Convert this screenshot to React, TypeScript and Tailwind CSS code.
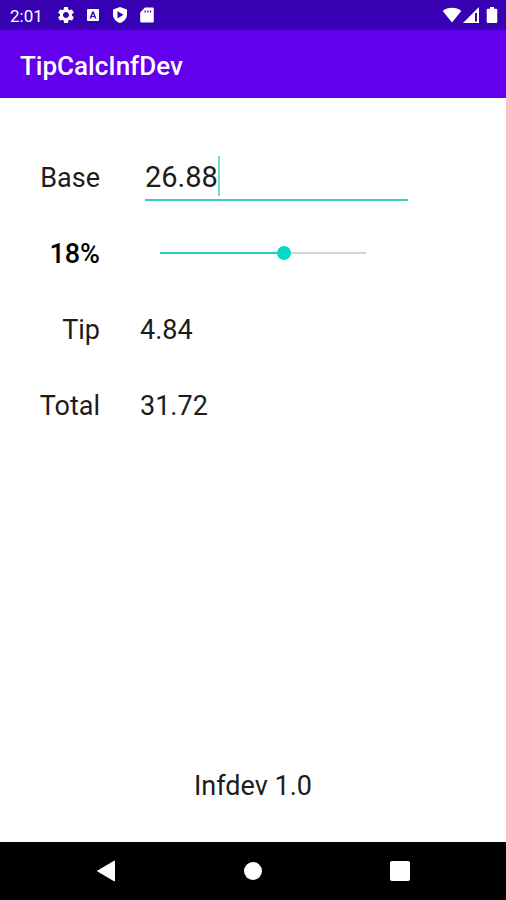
import React, { useState } from 'react';
import { MdSettings } from 'react-icons/md';

const MAX_PERCENT = 30;

const StatusBar = () => (
  <div className="flex h-[30px] items-center justify-between bg-[#3700b3] pl-[10px] pr-[5px] text-white">
    <div className="flex items-center">
      <span className="w-[46px] pt-0.5 text-[17px] leading-5">2:01</span>
      <div className="flex items-center gap-[9px]">
        <MdSettings className="h-5 w-5" />
        <svg viewBox="0 0 16 16" className="h-4 w-4">
          <path
            fillRule="evenodd"
            fill="currentColor"
            d="M3 2h10a1 1 0 0 1 1 1v10a1 1 0 0 1-1 1H3a1 1 0 0 1-1-1V3a1 1 0 0 1 1-1ZM7.2 4.5 4.6 11.5h1.5l.5-1.4h2.8l.5 1.4h1.5L8.8 4.5ZM8 6.3l.9 2.6H7.1Z"
          />
        </svg>
        <svg viewBox="0 0 20 20" className="h-5 w-5">
          <path
            fillRule="evenodd"
            fill="currentColor"
            d="M10 2 17 4.6V9.5c0 4-2.9 7.2-7 8.5-4.1-1.3-7-4.5-7-8.5V4.6ZM7.5 6.2v7.2l6-3.6Z"
          />
        </svg>
        <svg viewBox="0 0 16 18" className="h-[18px] w-4">
          <path
            fillRule="evenodd"
            fill="currentColor"
            d="M6 1.5h7.5a1.3 1.3 0 0 1 1.3 1.3v12.4a1.3 1.3 0 0 1-1.3 1.3h-11a1.3 1.3 0 0 1-1.3-1.3V6.5ZM5.5 4.5v2h1.2v-2ZM8.2 4.5v2h1.2v-2ZM10.9 4.5v2h1.2v-2Z"
          />
        </svg>
      </div>
    </div>
    <div className="flex items-center">
      <svg viewBox="0 0 20 18" className="h-[18px] w-5">
        <path fill="currentColor" d="M10 16.5.7 5C3.2 2.8 6.5 1.7 10 1.7s6.8 1.1 9.300 3.300Z" />
      </svg>
      <svg viewBox="0 0 18 18" className="h-[18px] w-[18px]">
        <path fillRule="evenodd" fill="currentColor" d="M17 1v16H1ZM13 7v8.500h2V7Z" />
      </svg>
      <svg viewBox="0 0 18 18" className="ml-[3px] h-[18px] w-[18px]">
        <path
          fill="currentColor"
          d="M7 1h4v1.8h2a1.3 1.3 0 0 1 1.3 1.3V15.7A1.3 1.3 0 0 1 13 17H5a1.3 1.3 0 0 1-1.3-1.3V4.1A1.3 1.3 0 0 1 5 2.8h2Z"
        />
      </svg>
    </div>
  </div>
);

const NavBar = () => (
  <nav className="flex h-[58px] items-center bg-black px-8 text-white">
    <button type="button" aria-label="Back" className="flex flex-1 justify-center">
      <svg viewBox="0 0 22 22" className="h-[22px] w-[22px]">
        <path
          fill="currentColor"
          stroke="currentColor"
          strokeWidth="1"
          strokeLinejoin="round"
          d="M19.5 1v20L2.5 11Z"
        />
      </svg>
    </button>
    <button type="button" aria-label="Home" className="flex flex-1 justify-center">
      <span className="h-[18px] w-[18px] rounded-full bg-white" />
    </button>
    <button type="button" aria-label="Recent apps" className="flex flex-1 justify-center">
      <span className="h-5 w-5 rounded-xs bg-white" />
    </button>
  </nav>
);

const App = () => {
  const [base, setBase] = useState('26.88');
  const [percent, setPercent] = useState(18);

  const amount = parseFloat(base) || 0;
  const tip = (amount * percent) / 100;

  return (
    <div className="flex min-h-screen flex-col bg-white font-['Roboto',sans-serif] text-black">
      <StatusBar />
      <header className="flex h-[68px] items-center bg-[#6200ee] px-5 pt-1">
        <h1 className="text-[26px] font-medium leading-8 text-white">TipCalcInfDev</h1>
      </header>

      <main className="flex flex-1 flex-col pt-[42px] text-[27px] leading-8 text-[#1c1c1c]">
        {/* Base amount */}
        <div className="flex h-[76px] items-center">
          <label htmlFor="base" className="w-[100px] text-right">
            Base
          </label>
          <div className="relative ml-[45px] mr-[98px] flex-1">
            <input
              id="base"
              type="text"
              inputMode="decimal"
              value={base}
              onChange={(e) => setBase(e.target.value)}
              className="block h-[46px] w-full border-b-2 border-[#35d3bf] bg-transparent text-[29px] caret-transparent outline-none"
            />
            <span className="absolute left-[73px] top-px h-10 w-0.5 bg-[#6fe0c0]" />
          </div>
        </div>

        {/* Tip percentage */}
        <div className="flex h-[76px] items-center">
          <label htmlFor="percent" className="w-[100px] text-right font-medium text-black">
            {percent}%
          </label>
          <div className="relative mb-0.5 ml-[60px] mr-[140px] flex h-[14px] flex-1 items-center">
            <div className="h-0.5 w-full bg-[#d4d4d4]">
              <div
                className="h-full bg-[#22cdb8]"
                style={{ width: `${(percent / MAX_PERCENT) * 100}%` }}
              />
            </div>
            <input
              id="percent"
              type="range"
              min={0}
              max={MAX_PERCENT}
              value={percent}
              onChange={(e) => setPercent(Number(e.target.value))}
              className="absolute -inset-x-[7px] top-0 h-[14px] appearance-none bg-transparent outline-none [&::-webkit-slider-thumb]:h-[14px] [&::-webkit-slider-thumb]:w-[14px] [&::-webkit-slider-thumb]:appearance-none [&::-webkit-slider-thumb]:rounded-full [&::-webkit-slider-thumb]:bg-[#03dac5]"
            />
          </div>
        </div>

        {/* Results */}
        <div className="flex h-[76px] items-center gap-10">
          <span className="w-[100px] text-right">Tip</span>
          <output htmlFor="base percent">{tip.toFixed(2)}</output>
        </div>
        <div className="flex h-[76px] items-center gap-10">
          <span className="w-[100px] text-right">Total</span>
          <output htmlFor="base percent">{(amount + tip).toFixed(2)}</output>
        </div>

        <footer className="mt-auto pb-10 text-center">Infdev 1.0</footer>
      </main>

      <NavBar />
    </div>
  );
};

export default App;
